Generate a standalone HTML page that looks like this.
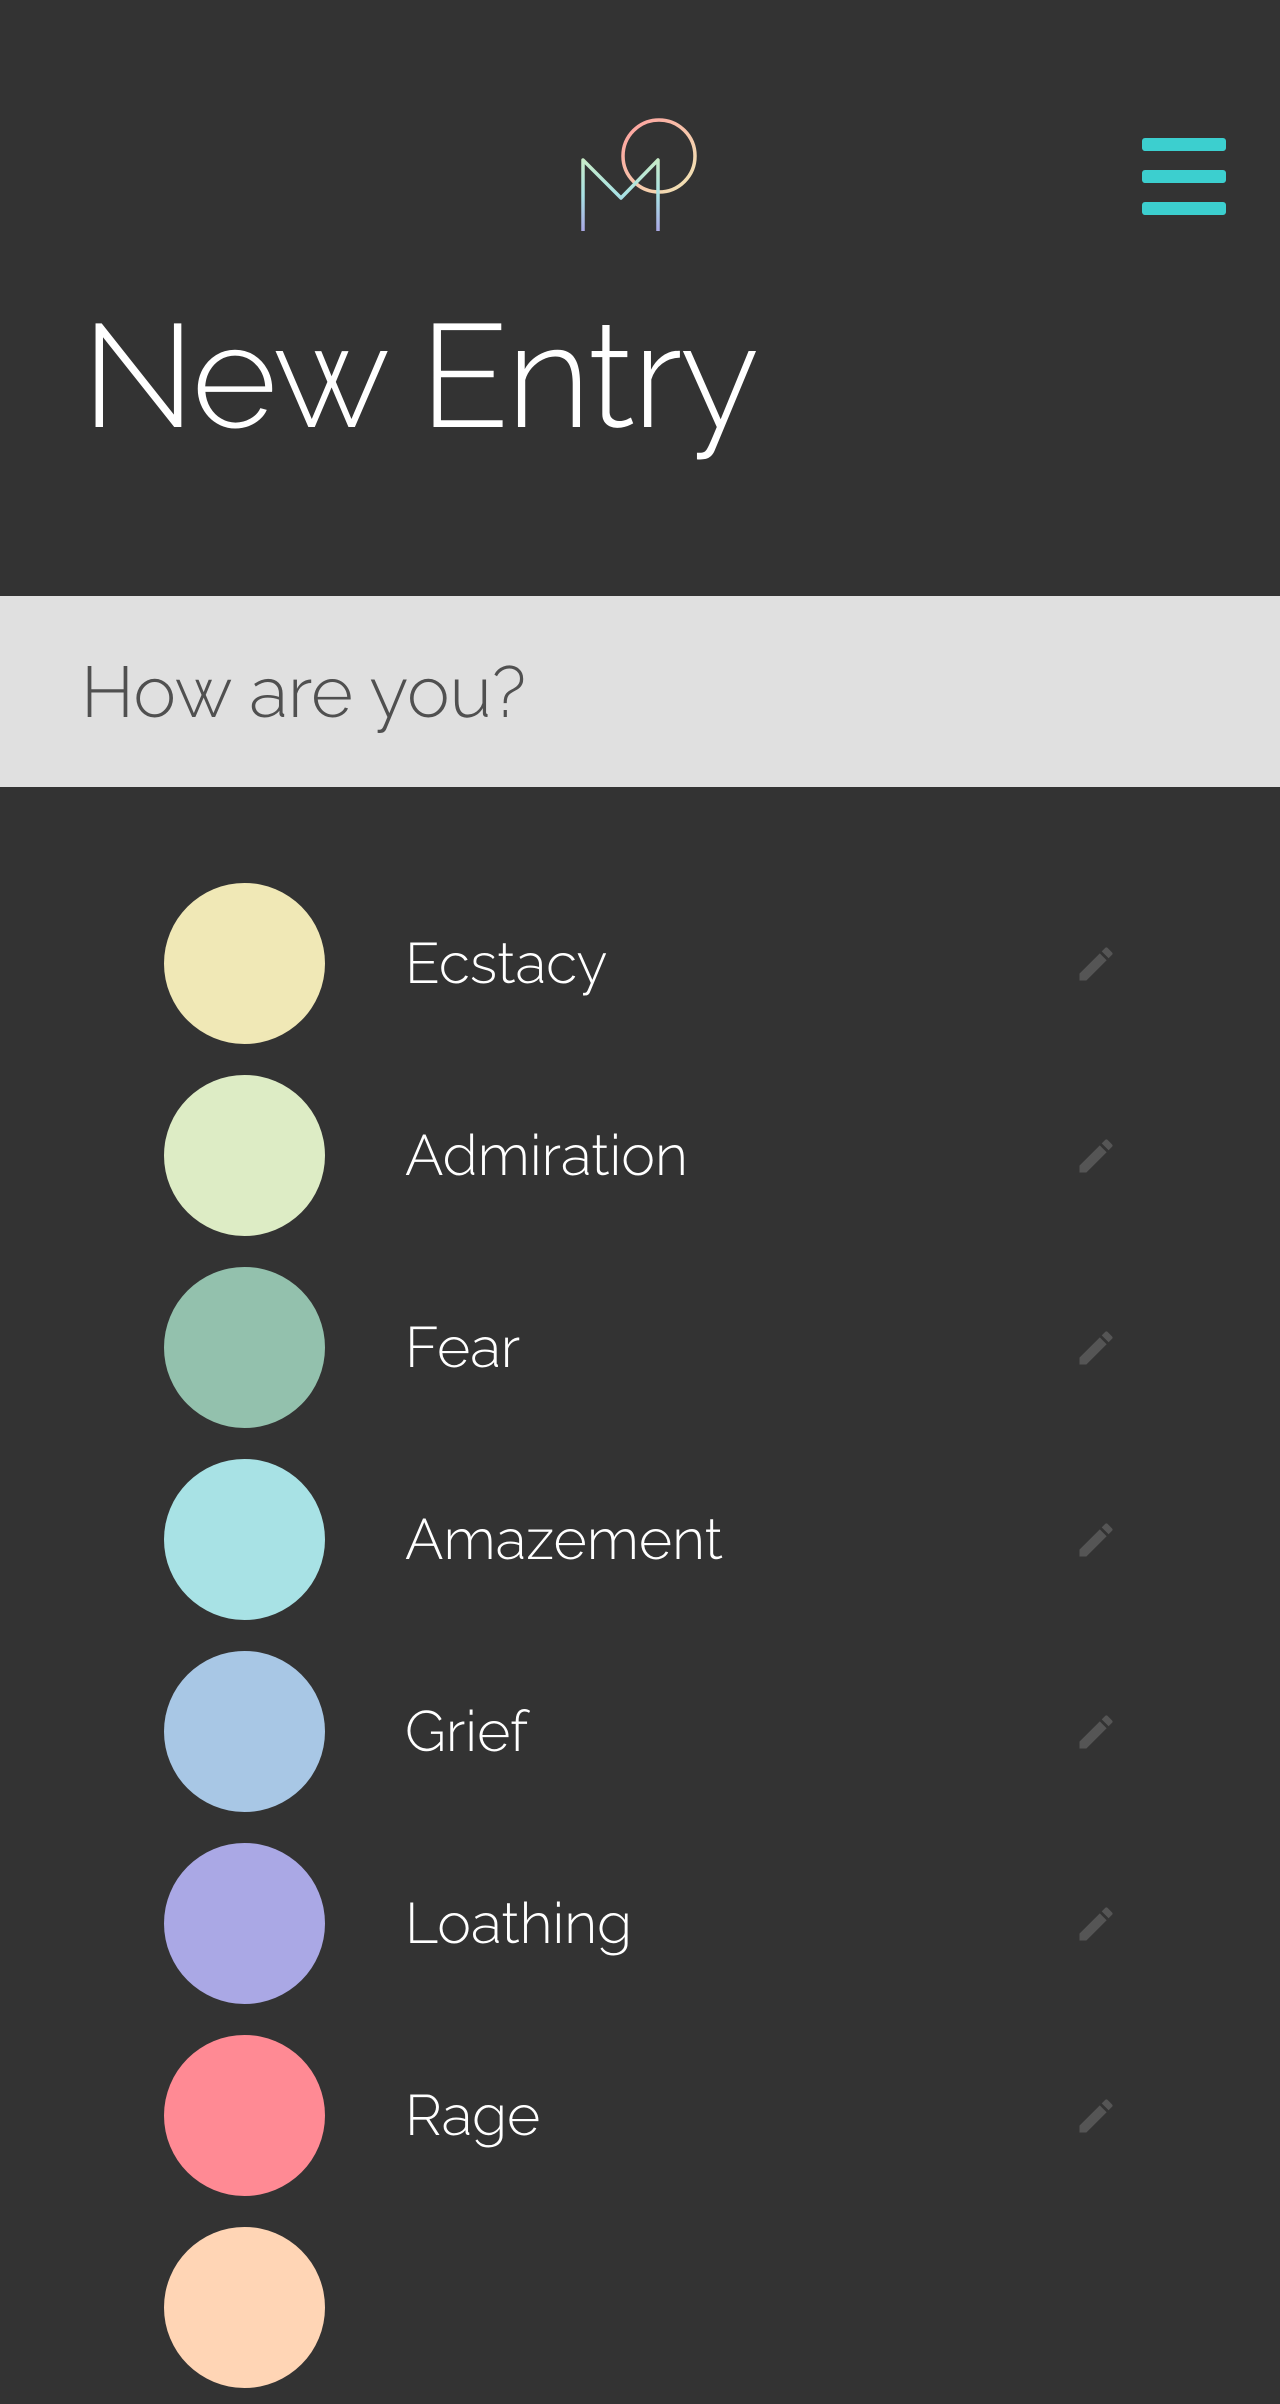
<!DOCTYPE html>
<html><head><meta charset="utf-8">
<style>
html,body{margin:0;padding:0;background:#333;}
body{width:1280px;height:2256px;overflow:hidden;position:relative;font-family:"Raleway","Liberation Sans",sans-serif;}
.bar{position:absolute;left:1142px;width:84px;height:13px;border-radius:3px;background:#3ccfcf;}
h1{position:absolute;left:82px;top:304px;margin:0;font-weight:300;font-size:146px;line-height:1;color:#fff;letter-spacing:-2px;}
.band{position:absolute;left:0;top:596px;width:1280px;height:191px;background:#e0e0e0;}
.q{position:absolute;left:81px;top:656px;font-size:72px;font-weight:300;color:#505050;line-height:1;}
.row{position:absolute;left:0;width:1280px;height:192px;}
.c{position:absolute;left:164px;top:15px;width:161px;height:161px;border-radius:50%;}
.l{position:absolute;left:405px;top:0;height:192px;line-height:192px;font-size:57px;color:#fff;font-weight:300;}
.p{position:absolute;left:1074px;top:74px;}
</style></head><body>
<svg style="position:absolute;left:570px;top:110px" width="140" height="130" viewBox="570 110 140 130">
<defs>
<linearGradient id="g1" x1="0" y1="0" x2="1" y2="1"><stop offset="0" stop-color="#ff9e9e"/><stop offset="1" stop-color="#f0e8b6"/></linearGradient>
<linearGradient id="g2" x1="0" y1="0" x2="0" y2="1"><stop offset="0" stop-color="#c8ecc8"/><stop offset="0.5" stop-color="#a8e2e5"/><stop offset="1" stop-color="#aaa8e5"/></linearGradient>
</defs>
<ellipse cx="659" cy="156" rx="36" ry="36" fill="none" stroke="url(#g1)" stroke-width="3.5"/>
<path d="M583 231 L583 160 L621 198 L658 160 L658 231" fill="none" stroke="url(#g2)" stroke-width="3.5" stroke-linejoin="round"/>
</svg>
<div class="bar" style="top:138px"></div>
<div class="bar" style="top:170px"></div>
<div class="bar" style="top:202px"></div>
<h1>New Entry</h1>
<div class="band"></div>
<div class="q">How are you?</div>

<div class="row" style="top:868px"><div class="c" style="background:#f0e8b6"></div><div class="l">Ecstacy</div><svg class="p" width="44" height="44" viewBox="0 0 24 24"><path fill="#555" d="M3 17.25V21h3.75L17.81 9.94l-3.75-3.75L3 17.25zM20.71 7.04a1 1 0 000-1.41l-2.340-2.34a1 1 0 00-1.41 0l-1.83 1.83 3.75 3.75 1.83-1.83z"/></svg></div>
<div class="row" style="top:1060px"><div class="c" style="background:#ddecc5"></div><div class="l">Admiration</div><svg class="p" width="44" height="44" viewBox="0 0 24 24"><path fill="#555" d="M3 17.25V21h3.75L17.81 9.94l-3.75-3.75L3 17.25zM20.71 7.04a1 1 0 000-1.41l-2.34-2.34a1 1 0 00-1.41 0l-1.83 1.83 3.75 3.75 1.83-1.83z"/></svg></div>
<div class="row" style="top:1252px"><div class="c" style="background:#93c1ad"></div><div class="l">Fear</div><svg class="p" width="44" height="44" viewBox="0 0 24 24"><path fill="#555" d="M3 17.25V21h3.75L17.81 9.94l-3.75-3.75L3 17.25zM20.71 7.04a1 1 0 000-1.41l-2.34-2.34a1 1 0 00-1.41 0l-1.83 1.83 3.75 3.75 1.83-1.83z"/></svg></div>
<div class="row" style="top:1444px"><div class="c" style="background:#a8e2e5"></div><div class="l">Amazement</div><svg class="p" width="44" height="44" viewBox="0 0 24 24"><path fill="#555" d="M3 17.25V21h3.75L17.81 9.94l-3.75-3.75L3 17.25zM20.71 7.04a1 1 0 000-1.41l-2.34-2.34a1 1 0 00-1.41 0l-1.83 1.83 3.75 3.75 1.83-1.83z"/></svg></div>
<div class="row" style="top:1636px"><div class="c" style="background:#a8c7e5"></div><div class="l">Grief</div><svg class="p" width="44" height="44" viewBox="0 0 24 24"><path fill="#555" d="M3 17.25V21h3.75L17.81 9.94l-3.75-3.75L3 17.25zM20.71 7.04a1 1 0 000-1.41l-2.34-2.34a1 1 0 00-1.41 0l-1.83 1.83 3.75 3.75 1.83-1.83z"/></svg></div>
<div class="row" style="top:1828px"><div class="c" style="background:#aaa8e5"></div><div class="l">Loathing</div><svg class="p" width="44" height="44" viewBox="0 0 24 24"><path fill="#555" d="M3 17.25V21h3.75L17.81 9.94l-3.75-3.75L3 17.25zM20.71 7.04a1 1 0 000-1.41l-2.34-2.34a1 1 0 00-1.41 0l-1.83 1.83 3.75 3.75 1.83-1.83z"/></svg></div>
<div class="row" style="top:2020px"><div class="c" style="background:#ff8a94"></div><div class="l">Rage</div><svg class="p" width="44" height="44" viewBox="0 0 24 24"><path fill="#555" d="M3 17.25V21h3.75L17.81 9.94l-3.75-3.75L3 17.25zM20.71 7.04a1 1 0 000-1.41l-2.34-2.34a1 1 0 00-1.41 0l-1.83 1.83 3.75 3.75 1.83-1.83z"/></svg></div>
<div class="row" style="top:2212px"><div class="c" style="background:#ffd5b5"></div></div>
</body></html>
